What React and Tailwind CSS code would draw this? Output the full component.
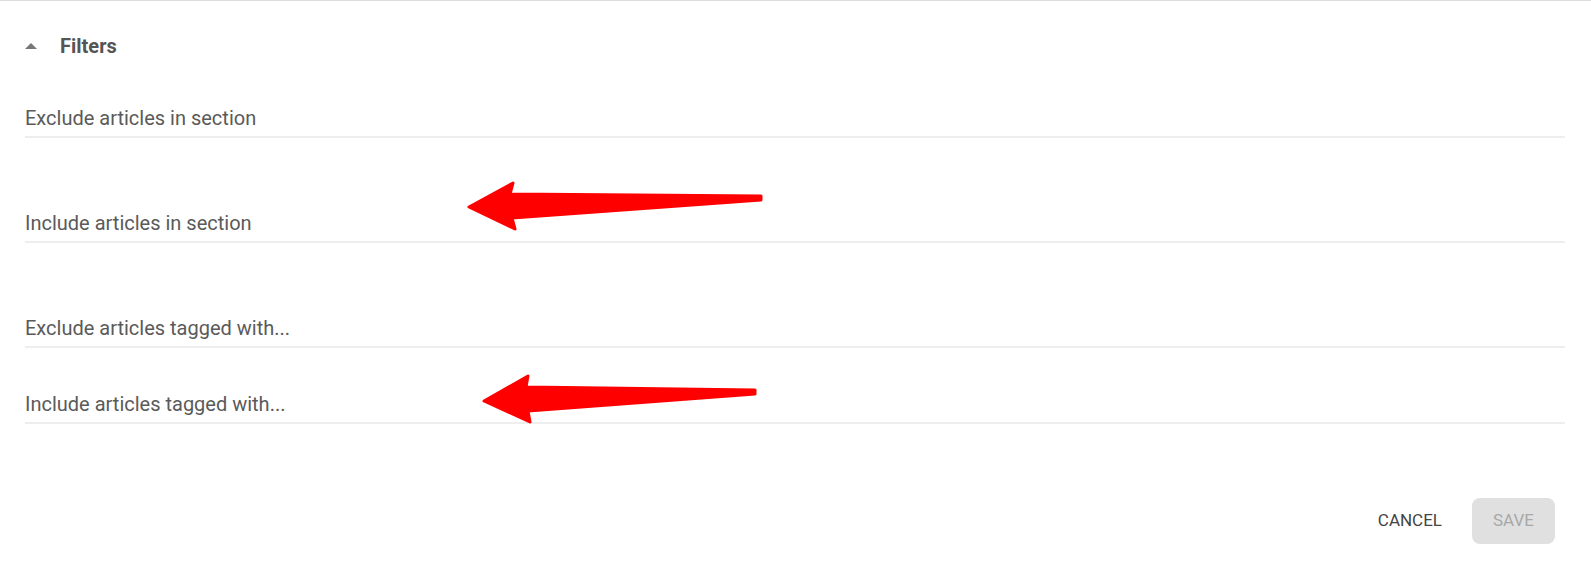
import React from 'react';

const fields = [
  { label: 'Exclude articles in section', mt: 'mt-[48px]' },
  { label: 'Include articles in section', mt: 'mt-[73px]' },
  { label: 'Exclude articles tagged with...', mt: 'mt-[73px]' },
  { label: 'Include articles tagged with...', mt: 'mt-[44px]' },
];

function Arrow({ tip, tail, headTop, headBottom, neckTop, neckBottom }) {
  // red annotation arrow drawn over the form
  const pts = [tip, headTop, neckTop, [tail[0], tail[1] - 2], [tail[0], tail[1] + 2], neckBottom, headBottom]
    .map(p => p.join(','))
    .join(' ');
  return <polygon points={pts} fill="#ff0000" stroke="#ff0000" strokeWidth="3" strokeLinejoin="round" />;
}

const App = () => {
  return (
    <div
      className="relative w-[1591px] h-[573px] bg-white border-t border-[#dcdcdc] overflow-hidden"
      style={{ fontFamily: 'Roboto, "Liberation Sans", sans-serif' }}
    >
      <div className="flex flex-col px-[25px]">
        <div className="mt-[33px] h-6 flex items-center">
          <span className="w-0 h-0 border-l-[6px] border-r-[6px] border-b-[6px] border-l-transparent border-r-transparent border-b-[#777]" />
          <span className="ml-[23px] text-[20px] font-bold text-[#555]">Filters</span>
        </div>
        {fields.map(f => (
          <div key={f.label} className={`${f.mt} w-[1540px] border-b-2 border-[#eeeeee] pb-[6px]`}>
            <div className="h-6 leading-6 text-[20px] text-[#5a5a5a]">{f.label}</div>
          </div>
        ))}
        <div className="mt-[74px] flex items-center justify-end w-[1540px] pr-[10px]">
          <button className="text-[17px] font-normal text-[#444] px-2">CANCEL</button>
          <button className="ml-[22px] w-[83px] h-[46px] rounded-[8px] bg-[#e0e0e0] text-[17px] font-normal text-[#a8a8a8]">
            SAVE
          </button>
        </div>
      </div>
      <svg className="absolute left-0 top-0 pointer-events-none" width="1591" height="573">
        <Arrow tip={[469, 206]} tail={[761, 197]} headTop={[513, 182]} headBottom={[515, 228]} neckTop={[510, 193]} neckBottom={[512, 217]} />
        <Arrow tip={[484, 400]} tail={[755, 391]} headTop={[528, 375]} headBottom={[530, 421]} neckTop={[526, 386]} neckBottom={[528, 410]} />
      </svg>
    </div>
  );
};

export default App;
